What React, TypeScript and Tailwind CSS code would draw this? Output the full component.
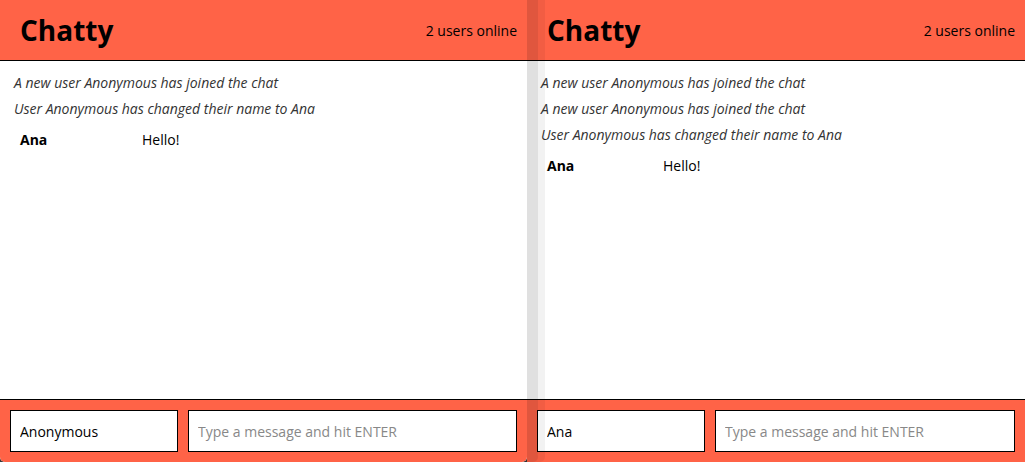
import React from 'react'

type Item =
  | { kind: 'notice'; text: string }
  | { kind: 'message'; user: string; text: string }

interface ChatWindowProps {
  name: string
  items: Item[]
  front?: boolean
  userCol: string
}

function ChatWindow({ name, items, front, userCol }: ChatWindowProps) {
  return (
    <div
      className={
        front
          ? 'relative z-10 flex h-full w-[527px] shrink-0 flex-col overflow-hidden rounded-b-[5px] bg-white shadow-[11px_0_0_0_rgba(0,0,0,0.07),18px_0_0_0_rgba(0,0,0,0.05)]'
          : 'relative flex h-full flex-1 flex-col bg-white'
      }
    >
      {/* Navbar */}
      <nav className="flex h-[61px] shrink-0 items-center justify-between border-b border-black bg-[#ff6347] pl-5 pr-[10px]">
        <span className="text-[28px] font-bold leading-none text-black">Chatty</span>
        <span className="text-[14px] text-black">2 users online</span>
      </nav>

      {/* Messages */}
      <main className="flex-1 overflow-hidden pt-[9px]">
        {items.map((item, i) =>
          item.kind === 'notice' ? (
            <div key={i} className="h-[26px] pl-[14px] text-[14px] italic leading-[26px] text-[#333]">
              {item.text}
            </div>
          ) : (
            <div key={i} className="mt-[4px] flex h-[26px] items-center pl-5 text-[14px] text-black">
              <span className={`${userCol} shrink-0 font-bold`}>{item.user}</span>
              <span>{item.text}</span>
            </div>
          )
        )}
      </main>

      {/* Chat bar */}
      <footer className="flex h-[63px] shrink-0 items-center gap-[10px] border-t border-black bg-[#ff6347] px-[10px]">
        <input
          readOnly
          defaultValue={name}
          className="h-[42px] w-[168px] shrink-0 border border-black bg-white px-[9px] text-[14px] text-black outline-none"
        />
        <input
          readOnly
          placeholder="Type a message and hit ENTER"
          className="h-[42px] min-w-0 flex-1 border border-black bg-white px-[9px] text-[14px] text-black outline-none placeholder:text-[#888]"
        />
      </footer>
    </div>
  )
}

export default function App() {
  return (
    <div
      className="flex h-[462px] w-[1025px] overflow-hidden bg-[#3a3a3a]"
      style={{ fontFamily: '"Open Sans", "Noto Sans", sans-serif' }}
    >
      <ChatWindow
        front
        name="Anonymous"
        userCol="w-[122px]"
        items={[
          { kind: 'notice', text: 'A new user Anonymous has joined the chat' },
          { kind: 'notice', text: 'User Anonymous has changed their name to Ana' },
          { kind: 'message', user: 'Ana', text: 'Hello!' },
        ]}
      />
      <ChatWindow
        name="Ana"
        userCol="w-[116px]"
        items={[
          { kind: 'notice', text: 'A new user Anonymous has joined the chat' },
          { kind: 'notice', text: 'A new user Anonymous has joined the chat' },
          { kind: 'notice', text: 'User Anonymous has changed their name to Ana' },
          { kind: 'message', user: 'Ana', text: 'Hello!' },
        ]}
      />
    </div>
  )
}
